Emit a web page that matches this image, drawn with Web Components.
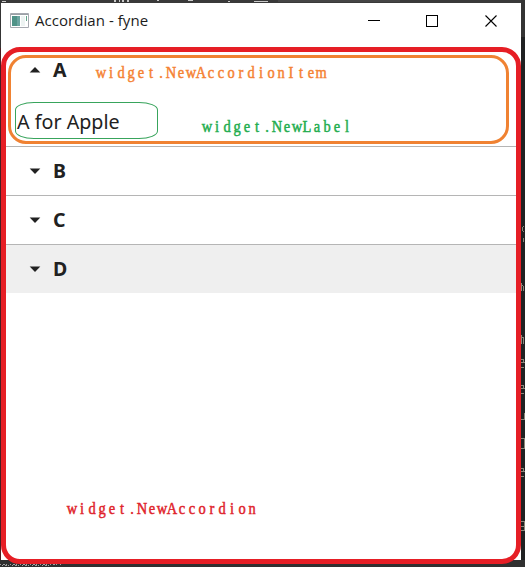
<!DOCTYPE html>
<html lang="en">
<head>
<meta charset="utf-8">
<title>Accordian - fyne</title>
<style>
html,body{margin:0;height:100%;overflow:hidden;background:#2b2b2c}
</style>
</head>
<body>
<desktop-canvas>
  <app-window caption="Accordian - fyne">
    <accordion-list>
      <accordion-item label="A" open>A for Apple</accordion-item>
      <accordion-item label="B"></accordion-item>
      <accordion-item label="C"></accordion-item>
      <accordion-item label="D" hovered></accordion-item>
    </accordion-list>
  </app-window>
  <outline-mark slot="over" style="left:1px;top:47px;width:520px;height:517px;--w:5px;--c:#e61e25;--r:19px"></outline-mark>
  <outline-mark slot="over" style="left:8px;top:55px;width:501px;height:89px;--w:3px;--c:#f08232;--r:18px"></outline-mark>
  <outline-mark slot="over" style="left:15px;top:102px;width:143px;height:37px;--w:1px;--c:#38a45c;--r:19px / 8px"></outline-mark>
  <note-text slot="over" text="widget.NewAccordionItem" style="left:96px;top:60px;color:#f58232"></note-text>
  <note-text slot="over" text="widget.NewLabel" style="left:202px;top:114px;color:#22ad4e"></note-text>
  <note-text slot="over" text="widget.NewAccordion" style="left:67px;top:496px;color:#e01f2b"></note-text>
</desktop-canvas>
<script>
function define(name, html, setup) {
  customElements.define(name, class extends HTMLElement {
    connectedCallback() {
      if (this.shadowRoot) return;
      const root = this.attachShadow({mode: 'open'});
      root.innerHTML = html;
      if (setup) setup(this, root);
    }
  });
}

define('desktop-canvas', `
<style>
:host{display:block;position:relative;box-sizing:border-box;width:525px;height:567px;padding:3px 4px 7px 1px;overflow:hidden;background:linear-gradient(90deg,#4b1c20 1px,#282828 1px)}
.back{position:absolute;inset:0;width:525px;height:567px}
</style>
<svg class="back" viewBox="0 0 525 567" shape-rendering="crispEdges">
  <path fill="#393939" d="M0 0H525V3H0z"/>
  <path fill="#454545" d="M278 0H400V2H278z"/>
  <path fill="#343434" d="M521 0h4V37h-4zM0 0h1V48H0z"/>
  <path fill="#202122" d="M521 37h4V560h-4z"/>
  <path fill="#303030" d="M0 560H525V567H0z"/>
  <path fill="#c9c9c9" d="M254 1h14v1h-14zM228 1h2v1h-2zM188 0h5v1h-5zM114 0h2v2h-2zM119 0h1v2h-1zM122 0h2v2h-2zM127 0h2v2h-2zM2 1h4v1h-4zM157 0h2v1h-2z"/>
  <path fill="none" stroke="#8d877a" d="M524 226q-3 3 0 6M524 238l-1 4M521.500 283v8M521 285q3-1 2.500 6M521.500 335v9M522 337q3 0 1 7M521 362h3q0-3-3-3M521 367h3M521 388h3q0-3-3-3M521 393h3M524 413v6h-3M521 438h3v10h-3M521 471h3q0-3-3-3M521 476h3M521 521h3v9h-3M521 526h3"/>
  <path fill="none" stroke="#a1a1a1" stroke-dasharray="1 2 2 1 1 3" d="M0 564.500H61M2 565.500H50"/>
</svg>
<slot></slot><slot name="over"></slot>`);

define('app-window', `
<style>
:host{display:flex;flex-direction:column;position:relative;box-sizing:border-box;width:520px;height:557px;background:#fff}
header{display:flex;align-items:center;height:35px;padding-left:9px}
.icon{width:19px;height:15px;flex:none}
.cap{margin-left:6px;padding-bottom:2px;width:118px;white-space:nowrap;font:15px/20px "Open Sans","Noto Sans",sans-serif;letter-spacing:.05px;color:#1c1c1c}
.buttons{display:flex;margin-left:auto;margin-right:0}
.buttons svg{width:59px;height:35px}
main{padding:14px 5px 0}
</style>
<header>
  <svg class="icon" viewBox="0 0 19 15"><path fill="#fff" stroke="#a6a9b0" d="M.5.5h18v14H.5z"/><path fill="#9aa1a6" d="M1 1h17v1H1z"/><path fill="#4f9287" d="M2 3h8v10H2z"/><path fill="#6ba4a0" d="M7 3h3v10H7z"/><path fill="#edf3f2" d="M11 3h4v10h-4z"/><path fill="#61a58a" d="M16 3h1v5h-1z"/></svg>
  <span class="cap"></span>
  <div class="buttons">
    <svg viewBox="0 0 59 35" shape-rendering="crispEdges"><path stroke="#000" d="M24 17.500h12"/></svg>
    <svg viewBox="0 0 59 35" shape-rendering="crispEdges"><path fill="none" stroke="#000" d="M23.500 12.500h11v11h-11z"/></svg>
    <svg viewBox="0 0 59 35"><path stroke="#000" stroke-width="1.100" d="M23.500 12.500l11 11M34.500 12.500l-11 11"/></svg>
  </div>
</header>
<main><slot></slot></main>`, (el, root) => {
  root.querySelector('.cap').textContent = el.getAttribute('caption');
});

define('accordion-list', `
<style>:host{display:flex;flex-direction:column;gap:1px;height:241px;background:#b5b5b5}</style><slot></slot>`);

define('accordion-item', `
<style>
:host{display:block;height:48px;background:#fff;color:#212121;font-family:"Noto Sans",sans-serif}
:host([open]){height:94px}
:host([hovered]){background:#efefef}
.head{display:flex;align-items:center;height:48px;padding-left:17px}
:host([open]) .head{height:35px}
svg{width:24px;height:24px}
b{font-size:19.500px;line-height:24px;margin-left:6px}
.body{padding:21px 0 0 11px;font-size:19.700px;line-height:27px;white-space:nowrap}
:host(:not([open])) .body{display:none}
</style>
<div class="head"><svg viewBox="0 0 24 24"><path fill="#212121"/></svg><b></b></div>
<div class="body"><slot></slot></div>`, (el, root) => {
  root.querySelector('b').textContent = el.getAttribute('label');
  root.querySelector('path').setAttribute('d', el.hasAttribute('open') ? 'M6.700 14.500h10.600l-5.300-5.500z' : 'M6.700 9.500h10.600l-5.300 5.500z');
});

define('outline-mark', `
<style>:host{position:absolute;box-sizing:border-box;border:var(--w) solid var(--c);border-radius:var(--r)}</style>`);

define('note-text', `
<style>
:host{display:block;position:absolute}
svg{display:block;overflow:visible}
text{font:17px "Liberation Serif",serif;fill:currentColor;stroke:currentColor;stroke-width:.5px;text-anchor:middle}
</style>
<svg height="24"><text y="18" transform="scale(.85 1)"></text></svg>`, (el, root) => {
  const s = el.getAttribute('text');
  const t = root.querySelector('text');
  t.textContent = s;
  // Every character is centred in a cell 10px wide.
  t.setAttribute('x', [...s].map((c, i) => ((i * 10 + 5) / .85).toFixed(2)).join(' '));
  root.querySelector('svg').setAttribute('width', s.length * 10 + 2);
});
</script>
</body>
</html>
